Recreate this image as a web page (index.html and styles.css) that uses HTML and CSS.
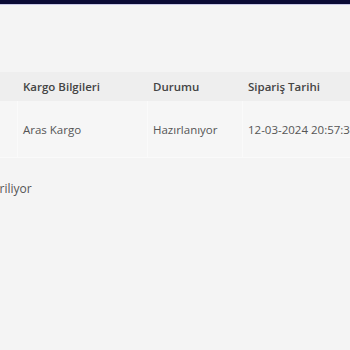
FILE: index.html
```html
<!DOCTYPE html>
<html lang="tr">

<head>
    <meta charset="UTF-8">
    <meta name="viewport" content="width=device-width, initial-scale=1.0">
    <title>Sipariş Detayı</title>
    <link rel="stylesheet" href="styles.css">
</head>

<body>
    <div class="topBar"></div>
    <div class="content">
        <table class="orderTable">
            <thead>
                <tr>
                    <th class="colNo"></th>
                    <th class="colCargo">Kargo Bilgileri</th>
                    <th class="colState">Durumu</th>
                    <th class="colDate">Sipariş Tarihi</th>
                </tr>
            </thead>
            <tbody>
                <tr>
                    <td class="colNo"></td>
                    <td>Aras Kargo</td>
                    <td>Hazırlanıyor</td>
                    <td>12-03-2024 20:57:34</td>
                </tr>
            </tbody>
        </table>
        <p class="note">Siparişiniz kargoya veriliyor</p>
    </div>
</body>

</html>
```

FILE: styles.css
```css
* {
    margin: 0;
    padding: 0;
    box-sizing: border-box;
}

body {
    background-color: #f4f4f4;
    font-family: "Open Sans", sans-serif;
    color: #555;
    overflow: hidden;
}

.topBar {
    height: 5px;
    background-color: #0b0b35;
    border-bottom: 1px solid #c8c8e6;
}

.content {
    margin-left: -120px;
    padding-top: 67px;
}

.orderTable {
    border-collapse: collapse;
    table-layout: fixed;
    width: 560px;
    font-size: 11.5px;
}

.orderTable th,
.orderTable td {
    text-align: left;
    padding: 0 5px;
    white-space: nowrap;
}

.orderTable th {
    height: 28px;
    background-color: #eeeeee;
    color: #444;
    font-weight: 600;
    border: 1px solid #eeeeee;
}

.orderTable td {
    height: 57px;
    background-color: #f6f6f6;
    border: 1px solid #fafafa;
}

.colNo {
    width: 137px;
}

.colCargo {
    width: 130px;
}

.colState {
    width: 95px;
}

.colDate {
    width: 198px;
}

.note {
    margin-top: 22px;
    font-size: 12px;
    color: #555;
}
```
